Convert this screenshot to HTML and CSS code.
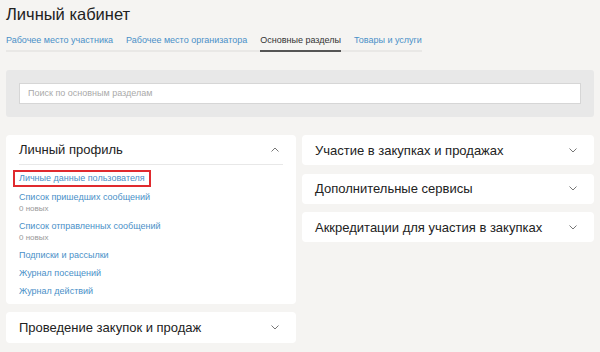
FILE: index.html
```html
<!DOCTYPE html>
<html lang="ru">
<head>
<meta charset="utf-8">
<link rel="stylesheet" href="styles.css">
</head>
<body>
<div class="page">
  <h1 class="title">Личный кабинет</h1>
  <nav class="tabs">
    <a class="tab">Рабочее место участника</a>
    <a class="tab">Рабочее место организатора</a>
    <a class="tab active">Основные разделы</a>
    <a class="tab">Товары и услуги</a>
  </nav>
  <div class="search-panel">
    <div class="search-input">Поиск по основным разделам</div>
  </div>
  <div class="columns">
    <div class="col">
      <div class="card open">
        <div class="card-head">
          <span class="card-title">Личный профиль</span>
          <svg class="chev" width="8" height="5" viewBox="0 0 8 5"><path d="M0.5 4.5 L4 1 L7.5 4.5" fill="none" stroke="#777" stroke-width="1"/></svg>
        </div>
        <ul class="links">
          <li class="hl"><a class="link highlighted">Личные данные пользователя</a></li>
          <li><a class="link">Список пришедших сообщений</a><div class="sub">0 новых</div></li>
          <li><a class="link">Список отправленных сообщений</a><div class="sub">0 новых</div></li>
          <li><a class="link">Подписки и рассылки</a></li>
          <li><a class="link">Журнал посещений</a></li>
          <li><a class="link">Журнал действий</a></li>
        </ul>
      </div>
      <div class="card">
        <div class="card-head plain tall">
          <span class="card-title">Проведение закупок и продаж</span>
          <svg class="chev" width="8" height="5" viewBox="0 0 8 5"><path d="M0.5 0.5 L4 4 L7.5 0.5" fill="none" stroke="#777" stroke-width="1"/></svg>
        </div>
      </div>
    </div>
    <div class="col right">
      <div class="card">
        <div class="card-head plain">
          <span class="card-title">Участие в закупках и продажах</span>
          <svg class="chev" width="8" height="5" viewBox="0 0 8 5"><path d="M0.5 0.5 L4 4 L7.5 0.5" fill="none" stroke="#777" stroke-width="1"/></svg>
        </div>
      </div>
      <div class="card">
        <div class="card-head plain">
          <span class="card-title">Дополнительные сервисы</span>
          <svg class="chev" width="8" height="5" viewBox="0 0 8 5"><path d="M0.5 0.5 L4 4 L7.5 0.5" fill="none" stroke="#777" stroke-width="1"/></svg>
        </div>
      </div>
      <div class="card">
        <div class="card-head plain">
          <span class="card-title">Аккредитации для участия в закупках</span>
          <svg class="chev" width="8" height="5" viewBox="0 0 8 5"><path d="M0.5 0.5 L4 4 L7.5 0.5" fill="none" stroke="#777" stroke-width="1"/></svg>
        </div>
      </div>
    </div>
  </div>
</div>
</body>
</html>
```
FILE: styles.css
```css
* { box-sizing: border-box; }
html, body { margin: 0; padding: 0; }
body {
  background: #f5f4f2;
  font-family: "Liberation Sans", Arial, sans-serif;
  color: #222;
  width: 600px;
  height: 352px;
  overflow: hidden;
}
.page { padding: 0 6px; }
.title {
  margin: 0;
  padding-top: 4px;
  font-size: 16.5px;
  font-weight: normal;
  line-height: 20px;
  color: #222;
}
.tabs {
  display: inline-flex;
  gap: 13px;
  margin-top: 10px;
  border-bottom: 2px solid #e9e8e6;
}
.tab {
  font-size: 9px;
  line-height: 12px;
  padding-bottom: 4px;
  color: #4a90c8;
  margin-bottom: -2px;
  border-bottom: 2px solid transparent;
}
.tab.active {
  color: #333;
  border-bottom: 2px solid #555;
}
.search-panel {
  margin-top: 18px;
  background: #e8e8e8;
  border-radius: 3px;
  padding: 13px;
}
.search-input {
  height: 21px;
  background: #fff;
  border: 1px solid #d6d6d6;
  padding: 0 8px;
  font-size: 9px;
  line-height: 19px;
  color: #aaa;
}
.columns {
  display: grid;
  grid-template-columns: 290px 1fr;
  gap: 6px;
  margin-top: 18px;
}
.col { display: flex; flex-direction: column; gap: 8px; }
.col.right { gap: 8.5px; }
.card {
  background: #fff;
  border-radius: 4px;
  padding: 0 13px;
}
.card-head {
  height: 30px;
  display: flex;
  align-items: center;
  justify-content: space-between;
  border-bottom: 1px solid #e8e8e8;
}
.card-head.plain { border-bottom: none; }
.card-head.tall { height: 31px; }
.card-title { font-size: 13px; color: #222; }
.chev { margin-right: 4px; }
.links {
  list-style: none;
  margin: 0;
  padding: 7px 0 6px;
}
.links li { margin-bottom: 4px; }
.links li:last-child { margin-bottom: 0; }
.link {
  font-size: 9px;
  line-height: 14px;
  color: #4a90c8;
  display: block;
}
.links li.hl {
  height: 14px;
  display: flex;
  align-items: flex-start;
}
.link.highlighted {
  line-height: 13px;
  border: 2px solid #e02a2e;
  padding: 0 4px;
  margin: -2px 0 0 -6px;
}
.sub {
  font-size: 8px;
  line-height: 10px;
  padding-bottom: 1px;
  color: #999;
}
```
